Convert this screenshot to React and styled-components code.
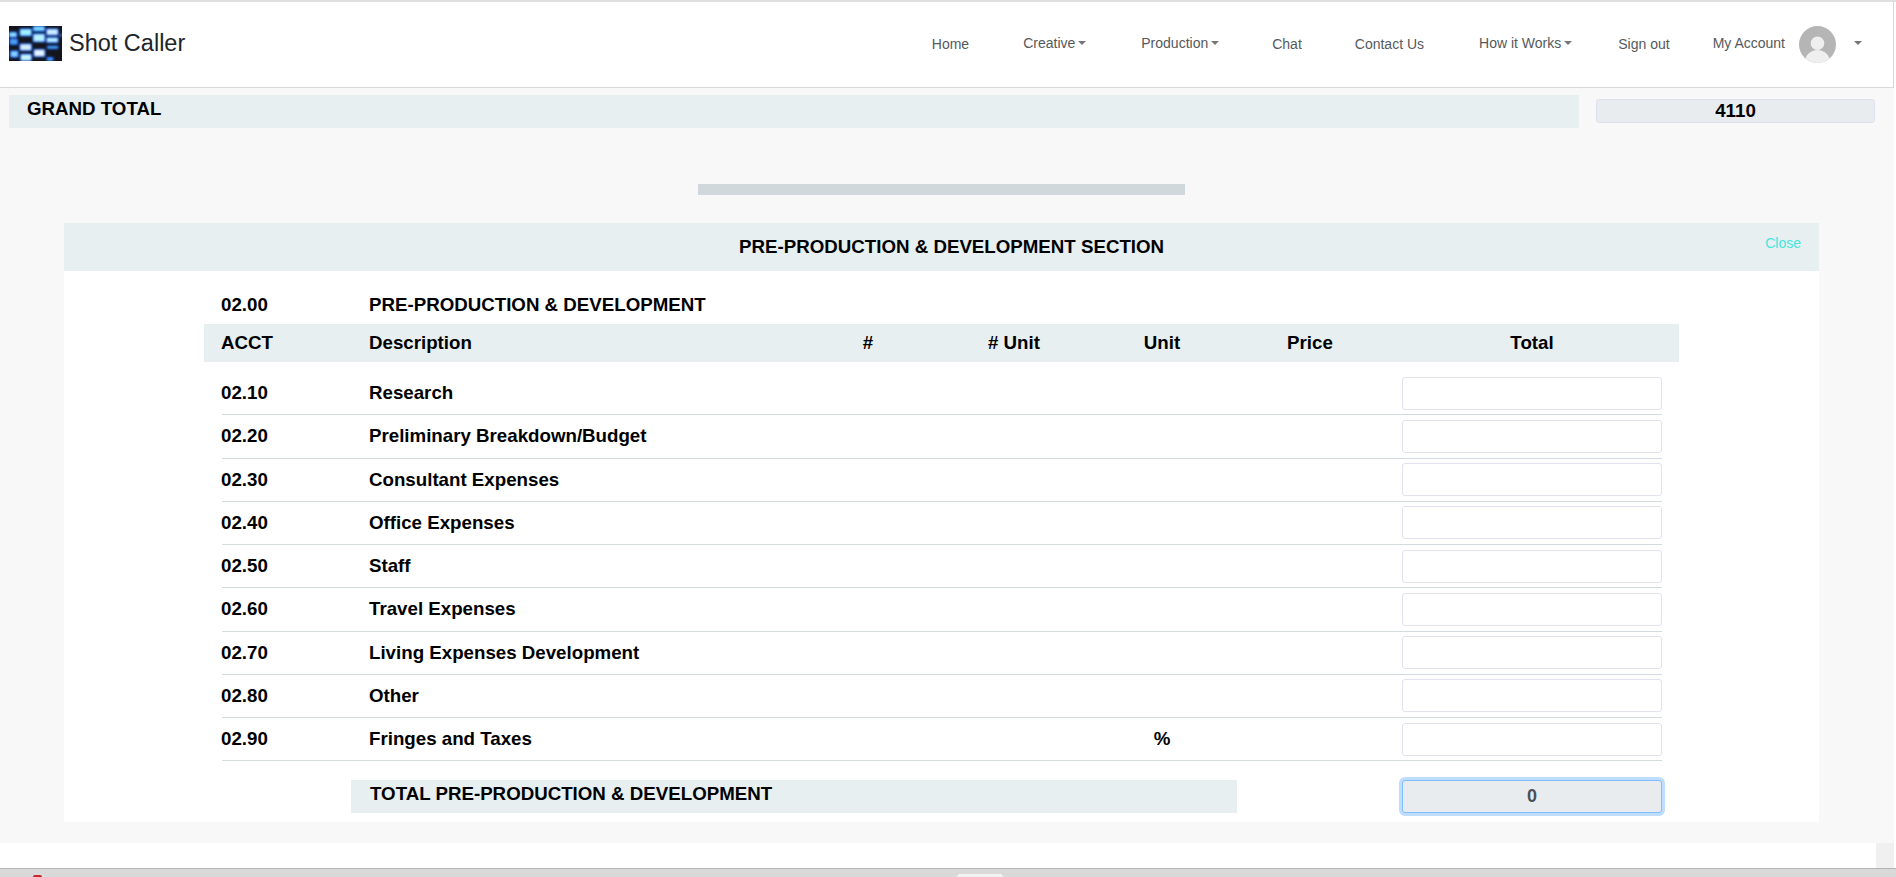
import React from 'react'
import styled, { createGlobalStyle } from 'styled-components'

const GlobalStyle = createGlobalStyle`
  html, body {
    margin: 0;
    height: 100%;
    overflow: hidden;
    background: #fff;
    font-family: "Liberation Sans", Arial, sans-serif;
  }
  * { box-sizing: border-box; }
`

const Page = styled.div`
  height: 877px;
  display: flex;
  flex-direction: column;
  border-top: 2px solid #e0e0e0;
`
const Nav = styled.nav`
  width: 1894px;
  height: 86px;
  flex: none;
  display: flex;
  align-items: center;
  padding: 0 31px 0 9px;
  background: #fff;
  border-bottom: 1px solid #d8d8d8;
  border-right: 1px solid #d8d8d8;
`
const Brand = styled.a`
  display: flex;
  align-items: center;
  gap: 7px;
  font-size: 23.5px;
  color: #212529;
  position: relative;
  top: -1px;
`
const NavList = styled.div`
  margin-left: auto;
  display: flex;
  align-items: center;
`
const NavLink = styled.a`
  display: flex;
  align-items: center;
  margin-left: ${p => p.$gap}px;
  font-size: 14px;
  color: #55595c;
  position: relative;
  top: ${p => (p.$raised ? -2 : -1)}px;
  ${p => p.$menu && `
    &::after {
      content: "";
      margin-left: 3px;
      border-top: 4px solid #777;
      border-left: 4px solid transparent;
      border-right: 4px solid transparent;
    }
  `}
`
const Avatar = styled.svg`
  width: 37px;
  height: 37px;
  margin-left: 14px;
  display: block;
`
const Caret = styled.span`
  margin-left: 18px;
  width: 0;
  height: 0;
  border-top: 4px solid #777;
  border-left: 4px solid transparent;
  border-right: 4px solid transparent;
  position: relative;
  top: -2px;
`
const Main = styled.main`
  width: 1894px;
  height: 755px;
  flex: none;
  background: #f8f8f8;
  padding: 7px 0 0 9px;
`
const GrandRow = styled.div`
  display: flex;
  align-items: flex-start;
`
const GrandBand = styled.div`
  width: 1570px;
  height: 33px;
  padding-left: 18px;
  background: #e7eff1;
  font-size: 18.72px;
  font-weight: bold;
  line-height: 28px;
  color: #000;
`
const GrandValue = styled.div`
  width: 279px;
  height: 24px;
  margin: 4px 0 0 17px;
  background: #e9ecef;
  border: 1px solid #e0e0ee;
  border-radius: 3px;
  text-align: center;
  font-size: 18.72px;
  font-weight: bold;
  line-height: 22px;
  color: #000;
`
const ProgressBar = styled.div`
  width: 487px;
  height: 11px;
  margin: 56px 0 0 689px;
  background: #d0d8db;
`
const Section = styled.section`
  width: 1755px;
  margin: 28px 0 0 55px;
  background: #fff;
`
const SectionHeader = styled.header`
  height: 48px;
  display: flex;
  align-items: center;
  padding: 0 18px 0 74px;
  background: #e7eff1;
`
const SectionTitle = styled.h2`
  flex: 1;
  margin: 0;
  text-align: center;
  font-size: 18.72px;
  font-weight: bold;
  color: #000;
`
const CloseLink = styled.a`
  margin-bottom: 8px;
  font-size: 14px;
  color: #45e6dc;
`
const SectionBody = styled.div`
  height: 551px;
  padding: 15px 0 0 140px;
`
const TitleRow = styled.div`
  height: 38px;
  margin-left: 18px;
  display: grid;
  grid-template-columns: 147px 1fr;
  align-items: start;
  padding-top: 8px;
  font-size: 18.72px;
  font-weight: bold;
  color: #000;
`
const Acct = styled.div`
  margin-left: -1px;
`
const columns = '147px 425px 148px 144px 152px 144px 280px'
const HeadRow = styled.div`
  width: 1475px;
  height: 38px;
  padding: 0 17px 0 18px;
  display: grid;
  grid-template-columns: ${columns};
  align-items: center;
  background: #e7eff1;
  font-size: 18.72px;
  font-weight: bold;
  color: #000;
`
const Rows = styled.div`
  margin: 10px 0 0 18px;
  width: 1440px;
`
const Row = styled.div`
  height: 43.25px;
  display: grid;
  grid-template-columns: ${columns};
  align-items: center;
  border-bottom: 1px solid #d3dbdc;
  font-size: 18.72px;
  font-weight: bold;
  color: #000;
`
const Center = styled.div`
  text-align: center;
  padding-left: ${p => (p.$shift ? 20 : 0)}px;
`
const AmountInput = styled.input`
  display: block;
  width: 260px;
  height: 33px;
  margin-left: 20px;
  padding: 0 12px;
  background: #fff;
  border: 1px solid #e3e0f0;
  border-radius: 3px;
  outline: none;
  font-family: inherit;
  font-size: 18px;
`
const TotalRow = styled.div`
  margin: 19px 0 0 18px;
  width: 1440px;
  display: flex;
  align-items: center;
  padding-left: 129px;
`
const TotalBand = styled.div`
  width: 886px;
  height: 33px;
  padding-left: 19px;
  background: #e7eff1;
  font-size: 18.72px;
  font-weight: bold;
  line-height: 28px;
  color: #000;
`
const TotalInput = styled.input`
  display: block;
  width: 260px;
  height: 33px;
  margin-left: 165px;
  background: #e9ecef;
  border: 1px solid #80bdff;
  border-radius: 3px;
  outline: none;
  box-shadow: 0 0 0 3px rgba(0, 123, 255, 0.25);
  text-align: center;
  font-family: inherit;
  font-size: 18px;
  font-weight: bold;
  color: #495057;
`
const FooterGap = styled.div`
  height: 25px;
  flex: none;
  display: flex;
  justify-content: flex-end;
  padding-right: 2px;
`
const GutterBlock = styled.div`
  width: 18px;
  background: #f0f0f0;
`
const Shelf = styled.div`
  flex: 1;
  display: flex;
  align-items: flex-end;
  padding-left: 33px;
  background: #d9d9d9;
  border-top: 1px solid #b4b4b4;
`
const RedMark = styled.span`
  width: 9px;
  height: 2px;
  background: #c82828;
  border-radius: 3px 3px 0 0;
`
const ShelfTab = styled.span`
  width: 46px;
  height: 3px;
  margin-left: 915px;
  background: #f2f2f2;
  border-radius: 3px 3px 0 0;
`

// x, y, w, h of each lit window in the logo, and its core colour
const blobs = [
  [0, 6, 8, 5.3, '#8fe0ff'],
  [0.7, 12.7, 8, 6, '#4fa0ee'],
  [10.7, 2.7, 12, 7.3, '#a0f0ff'],
  [10.7, 17.7, 12, 7, '#d4ecff'],
  [24, 0, 12, 5.3, '#7fd8ff'],
  [24, 7.7, 12, 8.3, '#b8f2ff'],
  [24.7, 23.3, 11.3, 7.4, '#e8f4ff'],
  [37.3, 2.7, 12, 6.6, '#cfeeff'],
  [37.3, 11.3, 12, 5.4, '#b8ecff'],
  [38, 20, 11.3, 2.7, '#5cc8ff'],
  [1.3, 24.7, 8, 6.6, '#84d0ff'],
  [11.3, 28, 11.4, 7, '#c8f6ff'],
  [37.7, 31.3, 6.6, 3.7, '#4aa8ff'],
  [50.7, 8, 2, 2.7, '#e8e8f0'],
]

const Logo = () => (
  <svg width="53" height="35" viewBox="0 0 53 35">
    <defs>
      <filter id="logoHalo" x="-10%" y="-10%" width="120%" height="120%">
        <feGaussianBlur stdDeviation="1.5" />
      </filter>
      <filter id="logoCore" x="-10%" y="-10%" width="120%" height="120%">
        <feGaussianBlur stdDeviation="1.1" />
      </filter>
      <clipPath id="logoClip">
        <rect width="53" height="35" />
      </clipPath>
    </defs>
    <g clipPath="url(#logoClip)">
      <rect width="53" height="35" fill="#14141c" />
      <g filter="url(#logoHalo)">
        {blobs.map(([x, y, w, h]) => (
          <rect key={`h${x}-${y}`} x={x} y={y} width={w} height={h} fill="#0a54f5" />
        ))}
      </g>
      <g filter="url(#logoCore)">
        {blobs.map(([x, y, w, h, fill]) => (
          <rect key={`c${x}-${y}`} x={x + 0.5} y={y + 0.5} width={w - 1} height={h - 1} fill={fill} />
        ))}
      </g>
    </g>
  </svg>
)

const AvatarIcon = () => (
  <Avatar viewBox="0 0 37 37">
    <defs>
      <clipPath id="avatarClip">
        <circle cx="18.5" cy="18.5" r="18.5" />
      </clipPath>
    </defs>
    <circle cx="18.5" cy="18.5" r="18.5" fill="#b5b5b5" />
    <g clipPath="url(#avatarClip)" fill="#efefef">
      <circle cx="18.5" cy="17.3" r="6.8" />
      <ellipse cx="18.5" cy="36" rx="12.5" ry="12" />
    </g>
  </Avatar>
)

const items = [
  ['02.10', 'Research'],
  ['02.20', 'Preliminary Breakdown/Budget'],
  ['02.30', 'Consultant Expenses'],
  ['02.40', 'Office Expenses'],
  ['02.50', 'Staff'],
  ['02.60', 'Travel Expenses'],
  ['02.70', 'Living Expenses Development'],
  ['02.80', 'Other'],
  ['02.90', 'Fringes and Taxes', '%'],
]

const App = () => {
  return (
    <Page>
      <GlobalStyle />
      <Nav>
        <Brand>
          <Logo />
          Shot Caller
        </Brand>
        <NavList>
          <NavLink $gap={0}>Home</NavLink>
          <NavLink $gap={54} $menu $raised>Creative</NavLink>
          <NavLink $gap={55} $menu $raised>Production</NavLink>
          <NavLink $gap={53}>Chat</NavLink>
          <NavLink $gap={53}>Contact Us</NavLink>
          <NavLink $gap={55} $menu $raised>How it Works</NavLink>
          <NavLink $gap={46}>Sign out</NavLink>
          <NavLink $gap={43} $raised>My Account</NavLink>
          <AvatarIcon />
          <Caret />
        </NavList>
      </Nav>
      <Main>
        <GrandRow>
          <GrandBand>GRAND TOTAL</GrandBand>
          <GrandValue>4110</GrandValue>
        </GrandRow>
        <ProgressBar />
        <Section>
          <SectionHeader>
            <SectionTitle>PRE-PRODUCTION &amp; DEVELOPMENT SECTION</SectionTitle>
            <CloseLink>Close</CloseLink>
          </SectionHeader>
          <SectionBody>
            <TitleRow>
              <Acct>02.00</Acct>
              <div>PRE-PRODUCTION &amp; DEVELOPMENT</div>
            </TitleRow>
            <HeadRow>
              <Acct>ACCT</Acct>
              <div>Description</div>
              <Center>#</Center>
              <Center># Unit</Center>
              <Center>Unit</Center>
              <Center>Price</Center>
              <Center $shift>Total</Center>
            </HeadRow>
            <Rows>
              {items.map(([acct, label, unit]) => (
                <Row key={acct}>
                  <Acct>{acct}</Acct>
                  <div>{label}</div>
                  <div />
                  <div />
                  <Center>{unit}</Center>
                  <div />
                  <AmountInput type="text" readOnly />
                </Row>
              ))}
            </Rows>
            <TotalRow>
              <TotalBand>TOTAL PRE-PRODUCTION &amp; DEVELOPMENT</TotalBand>
              <TotalInput type="text" value="0" readOnly />
            </TotalRow>
          </SectionBody>
        </Section>
      </Main>
      <FooterGap>
        <GutterBlock />
      </FooterGap>
      <Shelf>
        <RedMark />
        <ShelfTab />
      </Shelf>
    </Page>
  )
}

export default App
